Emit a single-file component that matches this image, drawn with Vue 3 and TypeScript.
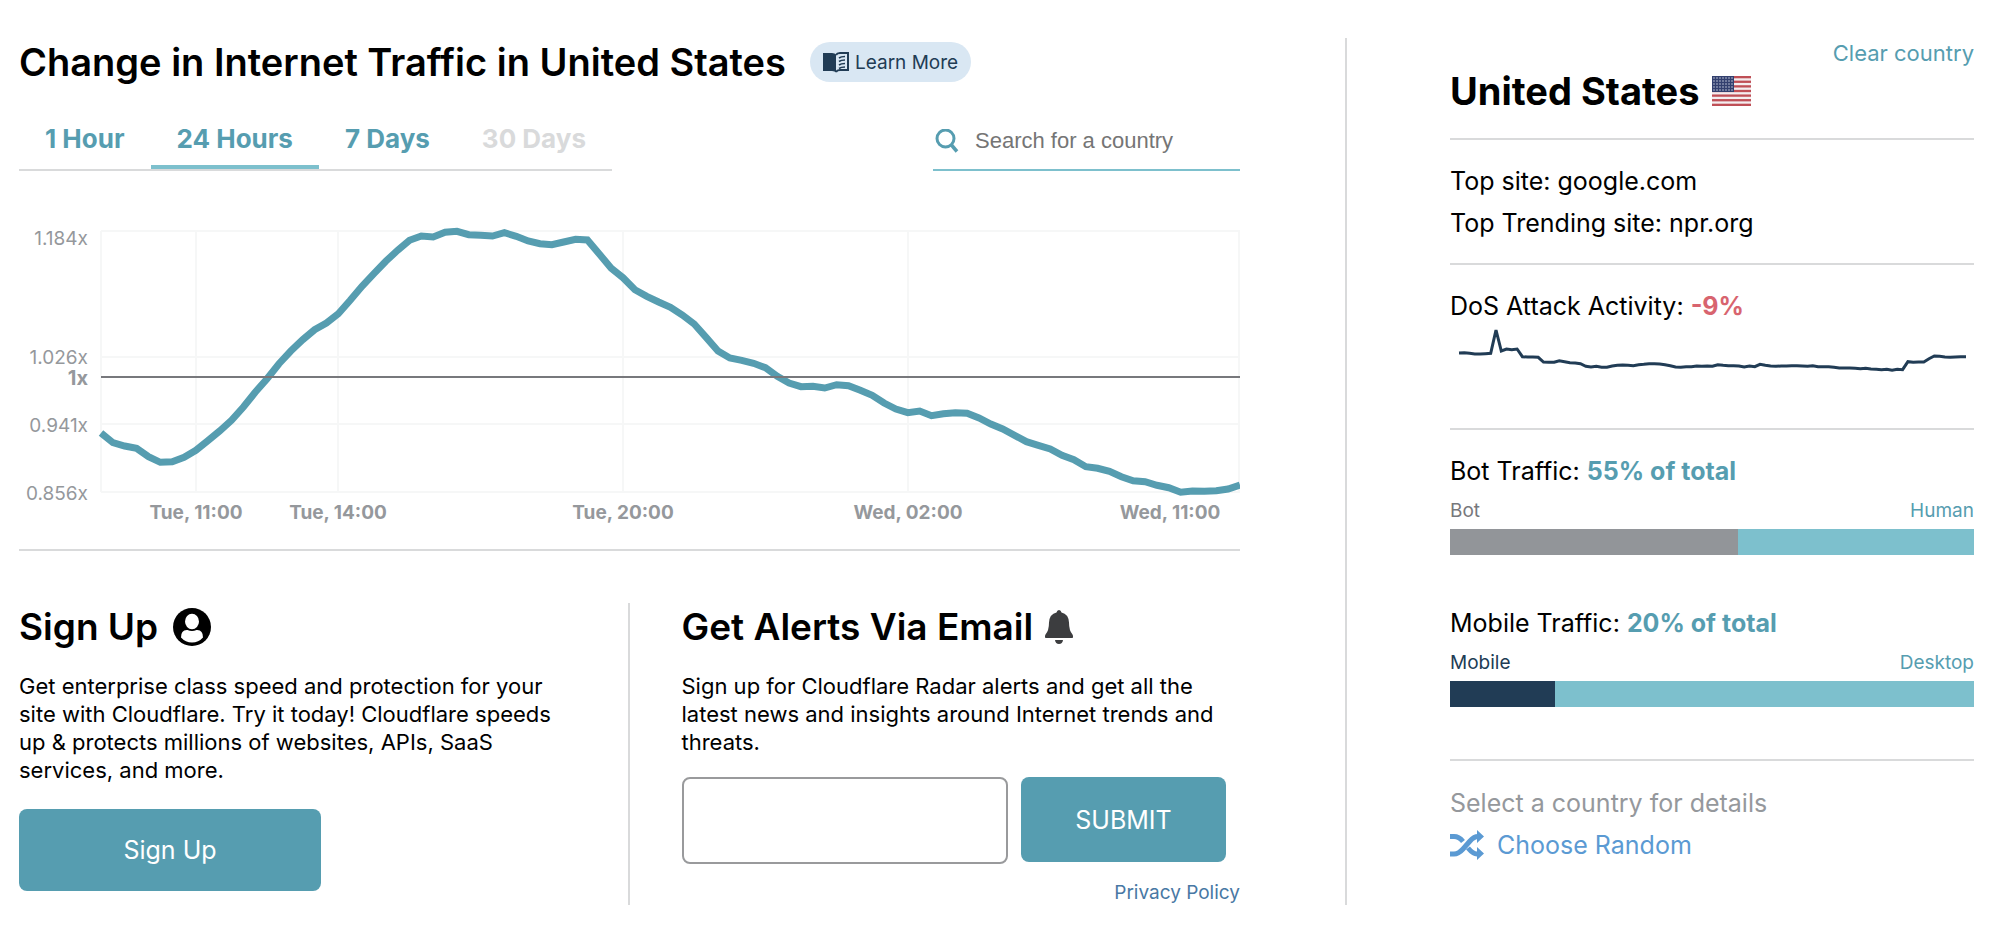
<script setup lang="ts">
interface Tab {
  label: string
  disabled?: boolean
}

interface Split {
  title: string
  value: number
  left: string
  right: string
  tone: 'bot' | 'mobile'
}

const tabs: Tab[] = [
  { label: '1 Hour' },
  { label: '24 Hours' },
  { label: '7 Days' },
  { label: '30 Days', disabled: true },
]
const activeTab = '24 Hours'

const splits: Split[] = [
  { title: 'Bot Traffic:', value: 55, left: 'Bot', right: 'Human', tone: 'bot' },
  { title: 'Mobile Traffic:', value: 20, left: 'Mobile', right: 'Desktop', tone: 'mobile' },
]

// Plot area inside the chart's view box
const plot = { left: 82, right: 1221, top: 6, bottom: 267 }

// One sample per 15 minutes, as thirds of a unit below the top gridline
const traffic: number[] = [
  606, 635, 645, 652, 677, 694, 692, 679, 658, 629, 600, 568, 528, 484, 443, 398,
  360, 326, 296, 276, 248, 208, 166, 128, 91, 58, 28, 15, 18, 4, 1, 11,
  13, 15, 5, 16, 30, 38, 41, 33, 25, 27, 69, 112, 140, 176, 196, 213,
  229, 252, 279, 319, 360, 381, 388, 397, 410, 436, 456, 467, 466, 471, 461, 464,
  478, 493, 516, 534, 545, 540, 554, 548, 545, 547, 561, 579, 594, 613, 632, 643,
  654, 673, 686, 707, 712, 721, 737, 749, 752, 763, 770, 784, 780, 781, 779, 774, 762,
]

const attacks: number[] = [
  69, 68, 70, 72, 72, 71, 70, 0, 63, 57, 59, 57, 80, 81, 81, 82,
  96, 97, 97, 92, 95, 98, 99, 101, 109, 111, 109, 112, 112, 108, 106, 105,
  106, 107, 104, 103, 101, 101, 102, 104, 107, 111, 112, 110, 110, 108, 109, 108,
  109, 104, 106, 107, 107, 108, 111, 108, 110, 103, 106, 108, 109, 108, 108, 107,
  107, 108, 109, 107, 110, 110, 110, 112, 114, 114, 114, 115, 116, 115, 117, 118,
  119, 118, 121, 118, 119, 95, 97, 96, 96, 86, 78, 79, 81, 82, 81, 80, 80,
]

function toPoints(values: number[], left: number, right: number, top: number): string {
  const step = (right - left) / (values.length - 1)
  return values.map((v, i) => `${(left + i * step).toFixed(1)},${(top + v / 3).toFixed(1)}`).join(' ')
}

const trafficPoints = toPoints(traffic, plot.left, plot.right, plot.top)
const attackPoints = toPoints(attacks, 9, 516, 4)

const yTicks = [
  { label: '1.184x', line: 6, text: 20 },
  { label: '1.026x', line: 132, text: 139 },
  { label: '0.941x', line: 199, text: 207 },
  { label: '0.856x', line: 267, text: 275 },
]
const xTicks = [
  { label: 'Tue, 11:00', line: 177, text: 177 },
  { label: 'Tue, 14:00', line: 319, text: 319 },
  { label: 'Tue, 20:00', line: 604, text: 604 },
  { label: 'Wed, 02:00', line: 889, text: 889 },
  { label: 'Wed, 11:00', line: 1220, text: 1151 },
]
const stars = Array.from({ length: 35 }, (_, i) => ({ x: 2 + (i % 7) * 3, y: 2 + Math.floor(i / 7) * 3 }))
</script>

<template>
  <div class="page">
    <main class="main">
      <header class="title-row">
        <h1>Change in Internet Traffic in United States</h1>
        <a class="learn" href="#learn">
          <svg class="book" viewBox="0 0 26 21" aria-hidden="true">
            <path d="M0 1h9q3 0 4 1.500v18q-1-1.500-4-1.500H0z" fill="#213c55" />
            <path d="M13 3q1-2 4-2h8v17h-8q-3 0-4 2" fill="none" stroke="#213c55" stroke-width="2" />
            <path d="M16 6q2-1.500 6-1.500M16 9.500q2-1.500 6-1.500M16 13q2-1.500 6-1.500M16 16.500q2-1.500 6-1.500" fill="none" stroke="#213c55" stroke-width="1.600" />
          </svg>
          Learn More
        </a>
      </header>

      <div class="controls">
        <nav class="tabs" aria-label="Time range">
          <button
            v-for="tab in tabs"
            :key="tab.label"
            type="button"
            class="tab"
            :class="{ active: tab.label === activeTab }"
            :disabled="tab.disabled"
          >{{ tab.label }}</button>
        </nav>
        <label class="search">
          <svg class="search-icon" viewBox="0 0 24 24" aria-hidden="true">
            <circle cx="10.500" cy="9.500" r="8.500" fill="none" stroke="#569db0" stroke-width="3" />
            <path d="M16 15.500L22 22.500" stroke="#569db0" stroke-width="3.500" />
          </svg>
          <input type="search" placeholder="Search for a country" aria-label="Search for a country" />
        </label>
      </div>

      <svg class="chart" viewBox="0 0 1221 304" role="img" aria-label="Traffic change over the last 24 hours">
        <g stroke="#f6f7f7" stroke-width="2">
          <line v-for="t in yTicks" :key="t.label" :x1="plot.left" :x2="plot.right" :y1="t.line" :y2="t.line" />
          <line :x1="plot.left" :x2="plot.left" :y1="plot.top" :y2="plot.bottom" />
          <line v-for="t in xTicks" :key="t.label" :x1="t.line" :x2="t.line" :y1="plot.top" :y2="plot.bottom" />
        </g>
        <g class="y-labels">
          <text v-for="t in yTicks" :key="t.label" x="69" :y="t.text">{{ t.label }}</text>
          <text class="baseline" x="69" y="160">1x</text>
        </g>
        <g class="x-labels">
          <text v-for="t in xTicks" :key="t.label" :x="t.text" y="294">{{ t.label }}</text>
        </g>
        <polyline :points="trafficPoints" fill="none" stroke="#569db0" stroke-width="7" />
        <line :x1="plot.left" :x2="plot.right" y1="152" y2="152" stroke="#77787c" stroke-width="2" />
      </svg>

      <div class="cards">
        <section class="signup">
          <h2>
            Sign Up
            <svg class="person" viewBox="0 0 38 38" aria-hidden="true">
              <circle cx="19" cy="19" r="19" fill="#000" />
              <ellipse cx="19" cy="13.500" rx="7" ry="7.700" fill="#fff" />
              <path d="M8 29.500q0-8 6.500-7.500q4.500 2 9 0q6.500-.5 6.500 7.500q-4.500 5-11 5t-11-5z" fill="#fff" />
            </svg>
          </h2>
          <p>Get enterprise class speed and protection for your site with Cloudflare. Try it today! Cloudflare speeds up &amp; protects millions of websites, APIs, SaaS services, and more.</p>
          <button type="button" class="primary wide">Sign Up</button>
        </section>

        <section class="alerts">
          <h2>
            Get Alerts Via Email
            <svg class="bell" viewBox="0 0 28 34" aria-hidden="true">
              <path d="M14 0q2 0 2.500 2.500q7 1.500 7.500 10q0 8 3.500 12q1.500 3.500-1 3.500h-25q-2.500 0-1-3.500q3.500-4 3.500-12q.5-8.500 7.500-10q.5-2.500 2.500-2.500zM10 30h8q-.5 4-4 4t-4-4z" fill="#3c3d3f" />
            </svg>
          </h2>
          <p>Sign up for Cloudflare Radar alerts and get all the latest news and insights around Internet trends and threats.</p>
          <form class="subscribe" @submit.prevent>
            <input type="email" aria-label="Email address" />
            <button type="submit" class="primary">SUBMIT</button>
          </form>
          <a class="privacy" href="#privacy">Privacy Policy</a>
        </section>
      </div>
    </main>

    <aside class="side">
      <a class="clear" href="#clear">Clear country</a>
      <h2 class="country">
        United States
        <svg class="flag" viewBox="0 0 39 30" preserveAspectRatio="none" aria-hidden="true">
          <rect width="39" height="30" fill="#f4eef0" />
          <rect v-for="n in 7" :key="n" width="39" height="2.300" :y="(n - 1) * 4.615" fill="#bf4f56" />
          <rect width="22" height="16" fill="#33406f" />
          <circle v-for="(s, i) in stars" :key="i" :cx="s.x" :cy="s.y" r=".7" fill="#dfe3ee" />
        </svg>
      </h2>

      <div class="block sites">
        <p>Top site: google.com</p>
        <p>Top Trending site: npr.org</p>
      </div>

      <div class="block dos">
        <p>DoS Attack Activity: <strong class="down">-9%</strong></p>
        <svg class="spark" viewBox="0 0 524 52" role="img" aria-label="Attack activity trend">
          <polyline :points="attackPoints" fill="none" stroke="#213c55" stroke-width="3" />
        </svg>
      </div>

      <div class="block splits">
        <div v-for="s in splits" :key="s.title" :class="['split', s.tone]">
          <p>{{ s.title }} <strong>{{ s.value }}% of total</strong></p>
          <div class="legend"><span class="left">{{ s.left }}</span><span>{{ s.right }}</span></div>
          <div class="bar"><div class="fill" :style="{ width: s.value + '%' }"></div></div>
        </div>
      </div>

      <div class="block picker">
        <p class="muted">Select a country for details</p>
        <button type="button" class="random">
          <svg class="shuffle" viewBox="0 0 34 30" aria-hidden="true">
            <g fill="none" stroke="#5b9ad3" stroke-width="5">
              <path d="M0 6.500h4q5 0 9 5M0 24h4q4.500 0 9-5l7-8q4-4.500 8-4.500h2M18 18q5 6 9 6h3" />
            </g>
            <path d="M27 0l7 6.500l-7 6.500zM27 17l7 6.500l-7 6.500z" fill="#5b9ad3" />
          </svg>
          Choose Random
        </button>
      </div>
    </aside>
  </div>
</template>

<style>
body {
  margin: 0;
  background: #fff;
}
</style>

<style scoped>
.page {
  display: grid;
  grid-template-columns: minmax(0, 1221fr) minmax(0, 629fr);
  column-gap: 105px;
  padding: 38px 25px 28px 19px;
  font-family: Inter, "Liberation Sans", sans-serif;
  color: #000;
}

h1,
h2,
p {
  margin: 0;
}

h1,
h2 {
  font-size: 37px;
  line-height: 48px;
  font-weight: 600;
}

h1,
.country {
  font-size: 38px;
}

.country {
  font-weight: 700;
}

a {
  text-decoration: none;
}

button,
input {
  font-family: inherit;
  margin: 0;
}

.title-row {
  display: flex;
  align-items: center;
  gap: 24px;
}

.learn {
  display: flex;
  align-items: center;
  gap: 6px;
  height: 40px;
  padding: 0 13px;
  border-radius: 20px;
  background: #d9e7f3;
  color: #213c55;
  font-size: 19px;
}

.book {
  width: 26px;
  height: 21px;
}

.controls {
  display: flex;
  justify-content: space-between;
  align-items: flex-end;
  height: 85px;
}

.tabs {
  display: flex;
  border-bottom: 2px solid #d9dadb;
}

.tab {
  padding: 0 26px 10px;
  border: 0;
  border-bottom: 4px solid transparent;
  background: none;
  color: #569db0;
  font-size: 26px;
  line-height: 32px;
  font-weight: 700;
}

.tab.active {
  border-bottom-color: #7dc0cd;
}

.tab:disabled {
  color: #d9dadb;
}

.search {
  display: flex;
  align-items: center;
  gap: 16px;
  width: 307px;
  height: 58px;
  box-sizing: border-box;
  padding-left: 2px;
  border-bottom: 2px solid #7dc0cd;
}

.search-icon {
  width: 24px;
  height: 24px;
  flex: none;
}

.search input {
  flex: 1;
  min-width: 0;
  border: 0;
  padding: 0;
  outline: 0;
  background: none;
  font-family: "Liberation Sans", Arial, sans-serif;
  font-size: 22px;
}

.search input::placeholder {
  color: #757575;
}

.chart {
  display: block;
  width: 100%;
  margin-top: 54px;
  padding-bottom: 20px;
  border-bottom: 2px solid #d9dadb;
}

.y-labels {
  fill: #95989c;
  font-size: 19px;
  text-anchor: end;
}

.y-labels .baseline {
  font-size: 20px;
  font-weight: 700;
}

.x-labels {
  fill: #95989c;
  font-size: 19px;
  font-weight: 700;
  text-anchor: middle;
}

.cards {
  display: grid;
  grid-template-columns: minmax(0, 1fr) minmax(0, 1fr);
  margin-top: 52px;
}

.cards h2 {
  display: flex;
  align-items: center;
}

.cards p {
  margin-top: 21px;
  font-size: 22px;
  line-height: 28px;
}

.signup {
  padding-right: 60px;
  border-right: 2px solid #d9dadb;
}

.alerts {
  padding-left: 52px;
}

.person {
  width: 38px;
  height: 38px;
  margin-left: 15px;
}

.bell {
  width: 28px;
  height: 34px;
  margin-left: 12px;
}

.primary {
  border: 0;
  border-radius: 8px;
  background: #569db0;
  color: #fff;
  font-size: 25px;
}

.wide {
  width: 302px;
  height: 82px;
  margin-top: 25px;
}

.subscribe {
  display: flex;
  gap: 13px;
  margin: 21px 14px 0 0;
}

.subscribe input {
  flex: 1;
  min-width: 0;
  height: 87px;
  box-sizing: border-box;
  border: 2px solid #999a9c;
  border-radius: 8px;
  padding: 0 16px;
  font-size: 22px;
}

.subscribe .primary {
  width: 205px;
  height: 85px;
}

.privacy {
  display: block;
  margin-top: 17px;
  color: #4878a4;
  font-size: 19px;
  line-height: 24px;
  text-align: right;
}

.side {
  border-left: 2px solid #d9dadb;
  padding-left: 103px;
  font-size: 25px;
  line-height: 42px;
}

.clear {
  display: block;
  padding-top: 1px;
  color: #569db0;
  font-size: 22px;
  line-height: 28px;
  text-align: right;
}

.country {
  display: flex;
  align-items: center;
  gap: 13px;
  padding-bottom: 23px;
}

.flag {
  width: 39px;
  height: 30px;
}

.block {
  border-top: 2px solid #d9dadb;
}

.sites {
  padding: 20px 0 19px;
}

.dos {
  height: 143px;
  padding-top: 20px;
}

.down {
  color: #d8646f;
}

strong {
  font-weight: 700;
}

.spark {
  display: block;
  width: 100%;
  margin-top: -1px;
}

.splits {
  display: grid;
  gap: 47px;
  padding: 20px 0 52px;
}

.split strong,
.legend {
  color: #569db0;
}

.legend {
  display: flex;
  justify-content: space-between;
  font-size: 19px;
  line-height: 37px;
}

.bot .left {
  color: #77787c;
}

.mobile .left {
  color: #213c55;
}

.bar {
  height: 26px;
  background: #7dc0cd;
}

.fill {
  height: 100%;
}

.bot .fill {
  background: #929599;
}

.mobile .fill {
  background: #213c55;
}

.picker {
  padding-top: 21px;
}

.muted {
  color: #95989c;
}

.random {
  display: flex;
  align-items: center;
  gap: 13px;
  border: 0;
  padding: 0;
  background: none;
  color: #5b9ad3;
  font-size: 25px;
  line-height: 42px;
}

.shuffle {
  width: 34px;
  height: 30px;
}
</style>
